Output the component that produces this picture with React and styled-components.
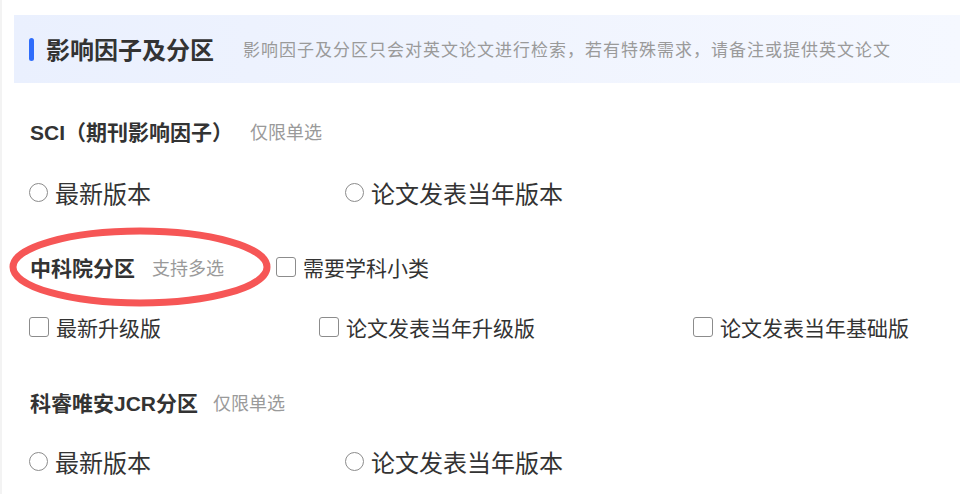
import React from 'react'
import styled, { createGlobalStyle } from 'styled-components'

const GlobalStyle = createGlobalStyle`
  html, body {
    margin: 0;
    padding: 0;
    background: #fff;
  }
  body {
    font-family: 'Liberation Sans', 'Noto Sans CJK SC', sans-serif;
    color: #333;
  }
`

const Page = styled.div`
  position: relative;
  width: 960px;
  height: 494px;
  overflow: hidden;
  box-sizing: border-box;
  padding: 15px 0 0 12px;
  border-left: 2px solid #f3f3f3;
`

const Header = styled.div`
  display: flex;
  align-items: center;
  height: 68px;
  padding-left: 15px;
  background: linear-gradient(90deg, #eaf0fe 0%, #f0f4fe 50%, #f5f8ff 100%);
`

const Bar = styled.span`
  width: 5px;
  height: 23px;
  border-radius: 3px;
  background: #2f6dfb;
  margin-right: 12px;
`

const Title = styled.h2`
  margin: 0;
  font-size: 24px;
  line-height: 30px;
  font-weight: 700;
  color: #333;
  margin-top: 4px;
`

const Subtitle = styled.span`
  margin-left: 29px;
  font-size: 17px;
  letter-spacing: 1px;
  line-height: 30px;
  color: #9a9a9a;
  margin-top: 4px;
`

const Body = styled.div`
  padding-left: 15px;
`

const Label = styled.div`
  display: flex;
  align-items: center;
  height: 30px;
  margin-top: ${p => p.$mt}px;
  padding-left: 1px;
`

const LabelText = styled.span`
  font-size: 21px;
  font-weight: 700;
  color: #333;
`

const Hint = styled.span`
  font-size: 18px;
  color: #9a9a9a;
  margin-left: ${p => p.$ml || 16}px;
  margin-right: ${p => p.$mr || 0}px;
`

const Options = styled.div`
  display: flex;
  align-items: center;
  height: ${p => p.$h}px;
  margin-top: ${p => p.$mt}px;
  gap: ${p => p.$gap}px;
`

const Option = styled.label`
  display: flex;
  align-items: center;
  gap: 7px;
  font-size: ${p => p.$size}px;
  color: #333;
  white-space: nowrap;
`

const RadioDot = styled.span`
  width: 17px;
  height: 17px;
  border: 1px solid #8c8c8c;
  border-radius: 50%;
  box-sizing: content-box;
`

const CheckBox = styled.span`
  width: 18px;
  height: 18px;
  border: 1px solid #8c8c8c;
  border-radius: 3px;
  box-sizing: content-box;
`

const Mark = styled.svg`
  position: absolute;
  left: 7px;
  top: 227px;
  pointer-events: none;
`

const Radio = ({ children }) => (
  <Option $size={24}>
    <RadioDot />
    {children}
  </Option>
)

const Check = ({ children, size = 21 }) => (
  <Option $size={size}>
    <CheckBox />
    {children}
  </Option>
)

const App = () => {
  return (
    <>
      <GlobalStyle />
      <Page>
        <Header>
          <Bar />
          <Title>影响因子及分区</Title>
          <Subtitle>影响因子及分区只会对英文论文进行检索，若有特殊需求，请备注或提供英文论文</Subtitle>
        </Header>
        <Body>
          <Label $mt={33}>
            <LabelText>SCI（期刊影响因子）</LabelText>
            <Hint $ml={17}>仅限单选</Hint>
          </Label>
          <Options $h={34} $mt={29} $gap={194}>
            <Radio>最新版本</Radio>
            <Radio>论文发表当年版本</Radio>
          </Options>

          <Label $mt={43}>
            <LabelText>中科院分区</LabelText>
            <Hint $ml={17} $mr={52}>支持多选</Hint>
            <Check>需要学科小类</Check>
          </Label>
          <Options $h={30} $mt={30} $gap={158}>
            <Check>最新升级版</Check>
            <Check>论文发表当年升级版</Check>
            <Check>论文发表当年基础版</Check>
          </Options>

          <Label $mt={45}>
            <LabelText>科睿唯安JCR分区</LabelText>
            <Hint $ml={15}>仅限单选</Hint>
          </Label>
          <Options $h={34} $mt={27} $gap={194}>
            <Radio>最新版本</Radio>
            <Radio>论文发表当年版本</Radio>
          </Options>
        </Body>
        <Mark width="262" height="80" viewBox="0 0 262 80">
          <ellipse cx="131" cy="40" rx="127" ry="36" fill="none" stroke="#f65656" strokeWidth="7" />
        </Mark>
      </Page>
    </>
  )
}

export default App
